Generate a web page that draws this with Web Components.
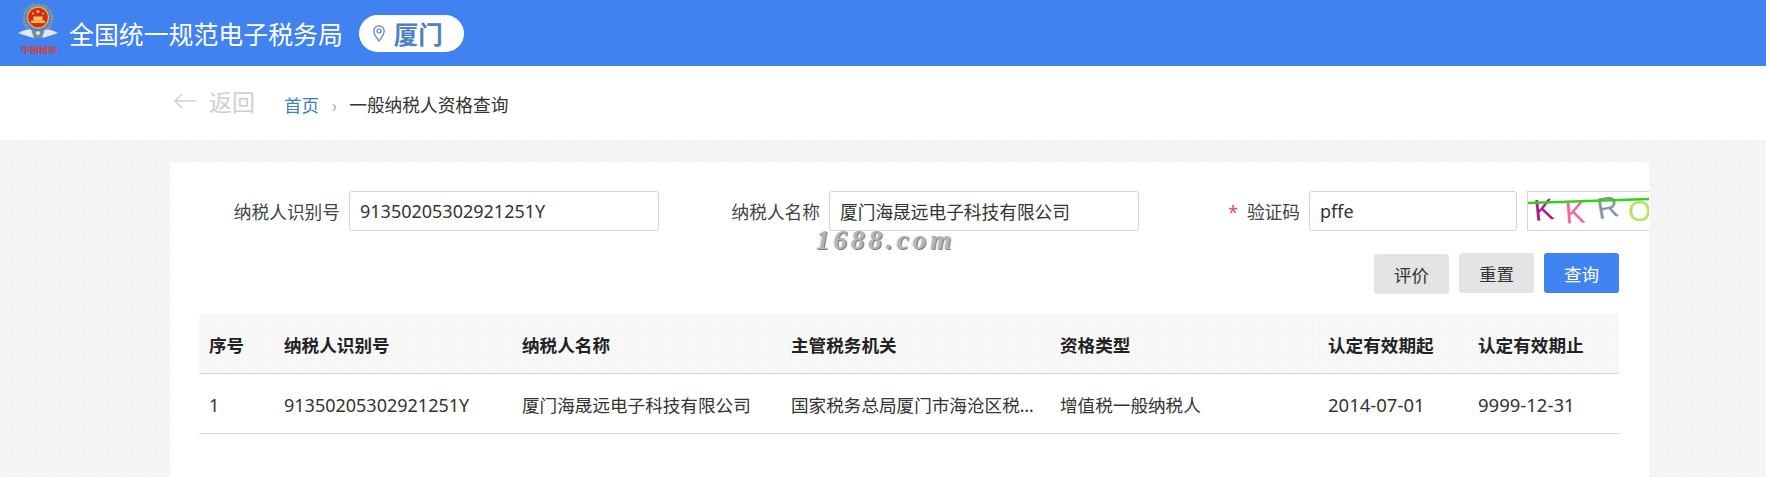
<!DOCTYPE html>
<html lang="zh">
<head>
<meta charset="utf-8">
<title>一般纳税人资格查询</title>
<style>
  html, body { margin: 0; height: 100%; overflow: hidden; }
  body { font-family: "Noto Sans", "Noto Sans CJK SC", sans-serif; color: #333; }
</style>
</head>
<body>
<tax-app>
  <tax-header slot="header" city="厦门">全国统一规范电子税务局</tax-header>
  <tax-crumbs slot="crumbs" current="一般纳税人资格查询"></tax-crumbs>
  <tax-form slot="form">
    <tax-field label="纳税人识别号" value="91350205302921251Y"></tax-field>
    <tax-field label="纳税人名称" value="厦门海晟远电子科技有限公司"></tax-field>
    <tax-field label="验证码" value="pffe" required captcha></tax-field>
    <tax-button slot="actions" style="margin-top:1px">评价</tax-button>
    <tax-button slot="actions">重置</tax-button>
    <tax-button slot="actions" primary>查询</tax-button>
  </tax-form>
  <tax-table slot="table"></tax-table>
</tax-app>

<script>
const CJK = '"Noto Sans CJK SC", sans-serif';
const LATIN_CJK = '"Noto Sans", "Noto Sans CJK SC", sans-serif';
// latin values run a bit larger than the chinese ones in the reference
const isLatin = s => /^[\x00-\x7f]+$/.test(s);

class TaxApp extends HTMLElement {
  constructor() {
    super();
    this.attachShadow({ mode: 'open' });
    this.shadowRoot.innerHTML = `
<style>
  :host { display: flex; flex-direction: column; height: 477px; overflow: hidden; background: #fff; }
  .main {
    flex: 1;
    padding: 22px 117px 0 170px;
    background: repeating-conic-gradient(#f1f1f1 0 25%, #f9f9f9 0 50%) 0 0 / 3px 3px;
  }
  .card { position: relative; height: 100%; padding-top: 29px; box-sizing: border-box; background: #fff; overflow: hidden; }
  .mark {
    position: absolute; left: 646px; top: 63px;
    font: italic bold 27px "Liberation Serif", serif;
    letter-spacing: 4px;
    color: #b4b4b4;
    text-shadow: 1px 1px 0 #7d7d7d, -1px 0 0 #e6e6e6;
  }
</style>
<slot name="header"></slot>
<slot name="crumbs"></slot>
<div class="main">
  <div class="card">
    <slot name="form"></slot>
    <slot name="table"></slot>
    <div class="mark">1688.com</div>
  </div>
</div>`;
  }
}

class TaxHeader extends HTMLElement {
  constructor() {
    super();
    this.attachShadow({ mode: 'open' });
    this.shadowRoot.innerHTML = `
<style>
  :host { display: flex; align-items: center; height: 66px; padding-left: 18px; background: #3f82f0; color: #fff; font-family: ${CJK}; }
  svg.logo { flex: none; width: 42px; height: 52px; margin-bottom: 6px; }
  .title { margin-left: 9px; font-size: 24.9px; white-space: nowrap; }
  .city {
    display: flex; align-items: center; box-sizing: border-box;
    width: 105px; height: 37px; margin: 0 0 0 16px; padding-left: 14px;
    border-radius: 19px; background: #fff; color: #4f80c4;
    font-size: 24.5px; font-weight: 600;
  }
  .city svg { width: 12px; height: 17px; margin-right: 9px; }
  .seal { font-size: 8px; font-weight: 700; fill: #d8392c; font-family: ${CJK}; }
</style>
<svg class="logo" viewBox="0 0 42 52">
  <circle cx="20" cy="14.5" r="14" fill="none" stroke="#8d9a86" stroke-width="3" stroke-dasharray="2 1"/>
  <circle cx="20" cy="13.5" r="10.5" fill="#d9271f"/>
  <circle cx="20" cy="13.5" r="10.5" fill="none" stroke="#e2b33a" stroke-width="1.3"/>
  <rect x="13" y="16.5" width="14" height="2.6" fill="#eec142"/>
  <rect x="15.5" y="12.5" width="9" height="4" fill="#f1cf5a"/>
  <circle cx="20" cy="7.5" r="1.5" fill="#f5d34e"/>
  <circle cx="15" cy="9.5" r="1" fill="#f5d34e"/>
  <circle cx="25" cy="9.5" r="1" fill="#f5d34e"/>
  <path d="M0 29 Q9 24 14 26 L16 34 Q8 32 0 29 Z" fill="#e4e8ec"/>
  <path d="M40 29 Q31 24 26 26 L24 34 Q32 32 40 29 Z" fill="#e4e8ec"/>
  <path d="M13 25 Q20 31 27 25 L24 34 H16 Z" fill="#76908c"/>
  <circle cx="20" cy="29" r="2" fill="#dfe6ea"/>
  <text class="seal" x="3" y="49" textLength="36" lengthAdjust="spacingAndGlyphs">中国税务</text>
</svg>
<div class="title"><slot></slot></div>
<div class="city">
  <svg viewBox="0 0 12 17" fill="none" stroke="#4f80c4" stroke-width="1.2">
    <path d="M6 16 C3.5 12.5 .8 9.5 .8 6 A5.2 5.2 0 0 1 11.2 6 C11.2 9.5 8.5 12.5 6 16 Z"/>
    <circle cx="6" cy="6" r="2"/>
  </svg>${this.getAttribute('city')}
</div>`;
  }
}

class TaxCrumbs extends HTMLElement {
  constructor() {
    super();
    this.attachShadow({ mode: 'open' });
    this.shadowRoot.innerHTML = `
<style>
  :host { display: flex; align-items: center; height: 74px; padding-left: 174px; background: #fff; font-family: ${CJK}; }
  .back { display: flex; align-items: center; color: #cfcfcf; font-size: 23px; margin-bottom: 4px; }
  .back svg { width: 22px; height: 16px; margin-right: 13px; }
  .home { margin-left: 29px; color: #3f80c4; font-size: 17.6px; padding-top: 2px; }
  .sep { width: 30px; text-align: center; color: #999; font-size: 17px; padding-top: 2px; }
  .now { color: #333; font-size: 17.7px; padding-top: 2px; }
</style>
<div class="back">
  <svg viewBox="0 0 22 16" fill="none" stroke="#cfcfcf" stroke-width="1.4"><path d="M22 8 H1 M8 1 L1 8 L8 15"/></svg>返回
</div>
<div class="home">首页</div>
<div class="sep">›</div>
<div class="now">${this.getAttribute('current')}</div>`;
  }
}

class TaxForm extends HTMLElement {
  constructor() {
    super();
    this.attachShadow({ mode: 'open' });
    this.shadowRoot.innerHTML = `
<style>
  :host { display: block; }
  .fields { display: grid; grid-template-columns: repeat(3, 480px); padding-left: 9px; }
  .actions { display: flex; justify-content: flex-end; align-items: flex-start; gap: 10px; height: 41px; margin: 22px 30px 20px 0; }
</style>
<div class="fields"><slot></slot></div>
<div class="actions"><slot name="actions"></slot></div>`;
  }
}

class TaxField extends HTMLElement {
  constructor() {
    super();
    this.attachShadow({ mode: 'open' });
    const star = this.hasAttribute('required') ? '<span class="star">*</span>' : '';
    const captcha = this.hasAttribute('captcha');
    const value = this.getAttribute('value');
    this.shadowRoot.innerHTML = `
<style>
  :host { display: flex; align-items: center; gap: 9px; font-family: ${LATIN_CJK}; font-size: 17.7px; color: #333; white-space: nowrap; }
  .label { flex: none; width: 161px; text-align: right; color: #444; }
  .star { margin-right: 9px; color: #d9534f; }
  .box {
    box-sizing: border-box; flex: none; width: ${captcha ? 208 : 310}px; height: 40px; padding: 0 10px;
    display: flex; align-items: center; font-size: ${isLatin(value) ? 18 : 17.7}px;
    border: 1px solid #d4d4d4; border-radius: 3px; background: #fff; color: #333;
  }
  svg { flex: none; width: 122px; height: 40px; margin-left: 1px; box-sizing: border-box; border: 1px solid #d4d4d4; border-right: 0; }
  text { font: 30px "Liberation Sans", sans-serif; }
</style>
<div class="label">${star}${this.getAttribute('label')}</div>
<div class="box">${value}</div>
${captcha ? `<svg viewBox="0 0 121 38">
  <text x="6" y="28" fill="#b0158c" transform="rotate(-6 16 18)">K</text>
  <text x="37" y="31" fill="#ee6ba0" transform="rotate(-4 47 20)">K</text>
  <text x="69" y="26" fill="#8a93a8" transform="rotate(-10 78 16)">R</text>
  <text x="100" y="29" fill="#b5e25a">O</text>
  <path d="M0 11 L121 7" stroke="#2fd41a" stroke-width="2.4"/>
</svg>` : ''}`;
  }
}

class TaxButton extends HTMLElement {
  constructor() {
    super();
    this.attachShadow({ mode: 'open' });
    const primary = this.hasAttribute('primary');
    this.shadowRoot.innerHTML = `
<style>
  :host {
    display: flex; align-items: center; justify-content: center;
    width: 75px; height: 40px; border-radius: 3px;
    font-family: ${CJK}; font-size: 17.5px;
    background: ${primary ? '#3f82f0' : '#e4e4e4'};
    color: ${primary ? '#fff' : '#333'};
  }
</style>
<slot></slot>`;
  }
}

class TaxTable extends HTMLElement {
  constructor() {
    super();
    this.attachShadow({ mode: 'open' });
    const heads = ['序号', '纳税人识别号', '纳税人名称', '主管税务机关', '资格类型', '认定有效期起', '认定有效期止'];
    const cells = ['1', '91350205302921251Y', '厦门海晟远电子科技有限公司', '国家税务总局厦门市海沧区税务局', '增值税一般纳税人', '2014-07-01', '9999-12-31'];
    this.shadowRoot.innerHTML = `
<style>
  :host {
    display: grid; grid-template-columns: 75px 238px 269px 269px 268px 150px 151px;
    grid-template-rows: 60px 60px; width: 1420px; margin-left: 29px;
    font-family: ${LATIN_CJK}; font-size: 17.6px; color: #333;
  }
  div { display: flex; align-items: center; min-width: 0; box-sizing: border-box; padding: 2px 10px 0; border-bottom: 1px solid #d6d6d6; }
  .th { font-family: ${CJK}; font-weight: 700; color: #222; background: repeating-conic-gradient(#f5f5f5 0 25%, #fafafa 0 50%) 0 0 / 3px 3px; }
  .num { font-size: 18px; }
  .date { font-size: 18.5px; }
  span { display: block; white-space: nowrap; overflow: hidden; text-overflow: ellipsis; }
</style>
${heads.map(h => `<div class="th"><span>${h}</span></div>`).join('')}
${cells.map(c => `<div><span class="${c.includes('-') ? 'date' : isLatin(c) ? 'num' : ''}">${c}</span></div>`).join('')}`;
  }
}

customElements.define('tax-app', TaxApp);
customElements.define('tax-header', TaxHeader);
customElements.define('tax-crumbs', TaxCrumbs);
customElements.define('tax-form', TaxForm);
customElements.define('tax-field', TaxField);
customElements.define('tax-button', TaxButton);
customElements.define('tax-table', TaxTable);
</script>
</body>
</html>
